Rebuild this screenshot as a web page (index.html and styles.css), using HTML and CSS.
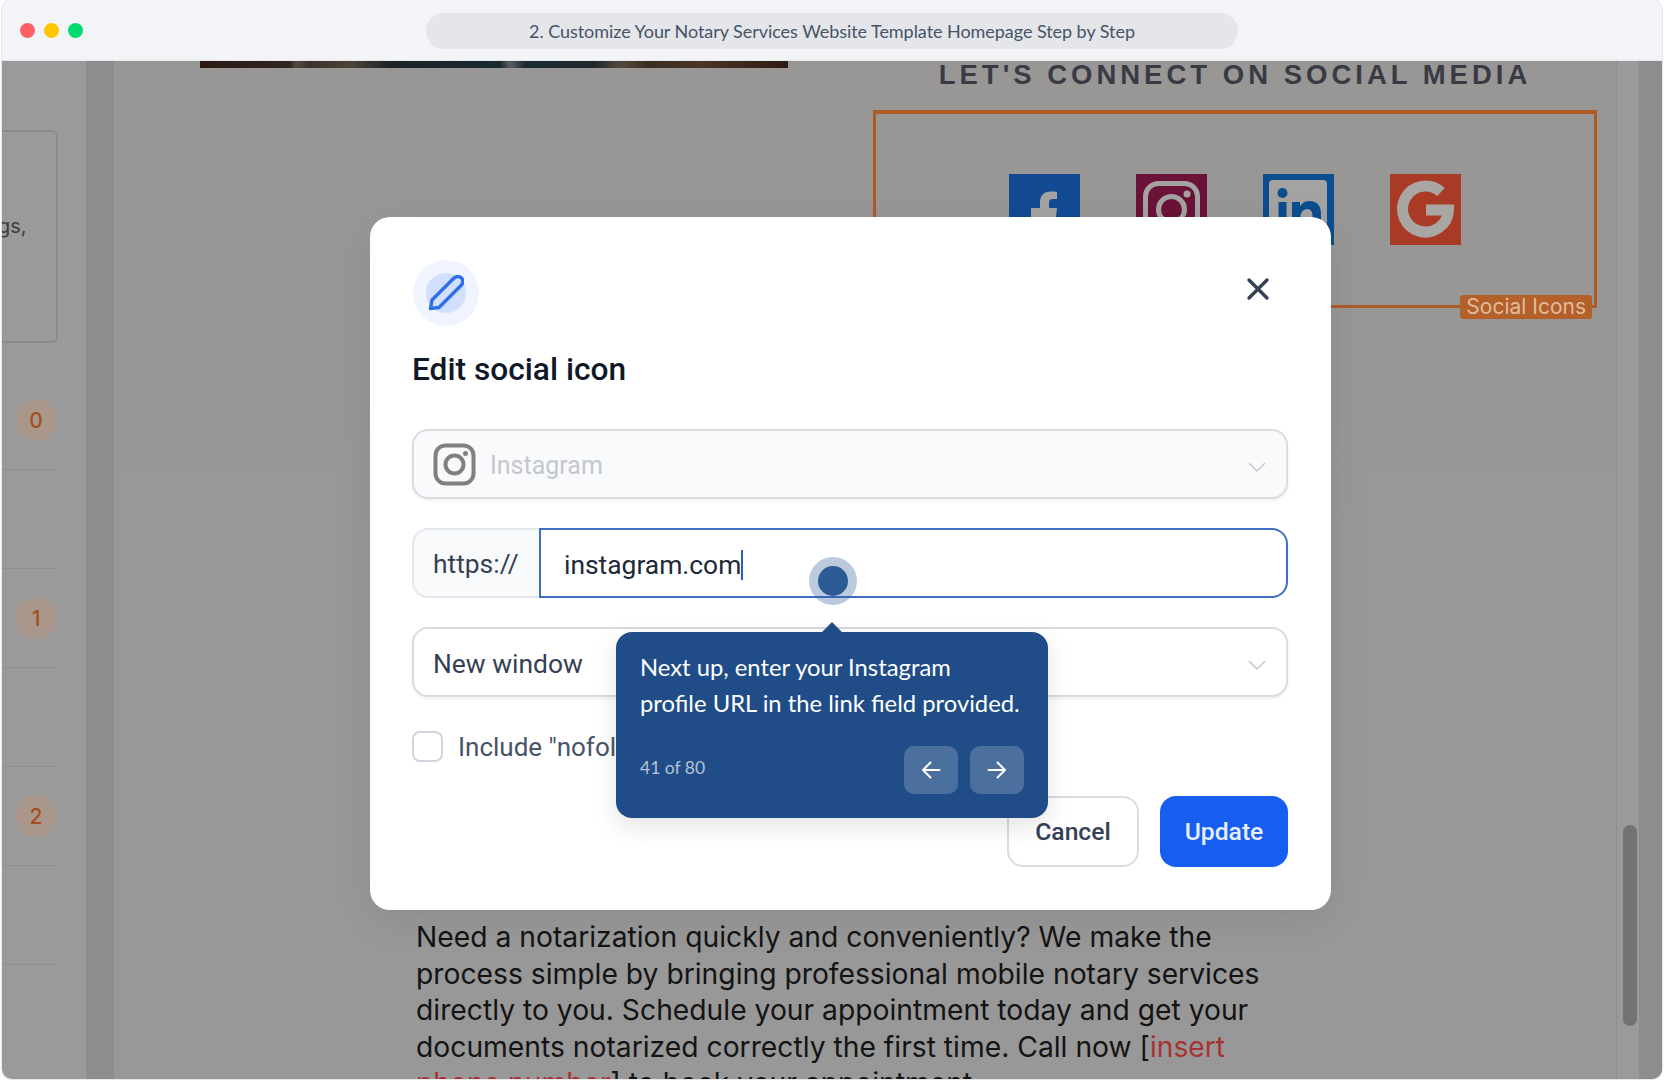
FILE: index.html
```html
<!DOCTYPE html>
<html>

<head>
    <meta content="text/html; charset=utf-8" http-equiv="Content-Type">
    <title>Edit social icon</title>
    <link rel="stylesheet" href="styles.css">
</head>

<body>
    <div class="appWindow">
        <div class="titleBar">
            <div class="trafficLights">
                <span class="light lightRed"></span>
                <span class="light lightYellow"></span>
                <span class="light lightGreen"></span>
            </div>
            <div class="addressPill">2. Customize Your Notary Services Website Template Homepage Step by Step</div>
        </div>

        <div class="stage">
            <div class="sideColumn">
                <div class="sideCard"><span class="sideCardText">gs,</span></div>
                <div class="sideRow firstRow"><span class="badge">0</span></div>
                <div class="sideRow"></div>
                <div class="sideRow"><span class="badge">1</span></div>
                <div class="sideRow"></div>
                <div class="sideRow"><span class="badge">2</span></div>
                <div class="sideRow"></div>
            </div>
            <div class="gutter"></div>

            <div class="canvas">
                <div class="topRow">
                    <div class="imageStrip"></div>
                    <div class="socialBlock">
                        <h2 class="socialHeading">LET'S CONNECT ON SOCIAL MEDIA</h2>
                        <div class="socialFrame">
                            <svg class="socialIcon" viewBox="0 0 71 71">
                                <rect width="71" height="71" fill="#124a94"></rect>
                                <path d="M31 71V43H22V34h9v-5c0-8 4-11.500 11-11.500 3 0 5 .2 6 .4V25h-4c-3 0-4 1.500-4 4v5h8l-1 9h-7v28z" fill="#a5a3a1"></path>
                            </svg>
                            <svg class="socialIcon" viewBox="0 0 71 71">
                                <rect width="71" height="71" fill="#6b1238"></rect>
                                <rect x="9.500" y="9.500" width="52" height="52" rx="13" fill="none" stroke="#a5a3a1" stroke-width="5"></rect>
                                <circle cx="35.500" cy="35.500" r="13" fill="none" stroke="#a5a3a1" stroke-width="5"></circle>
                                <circle cx="51" cy="20" r="3.500" fill="#a5a3a1"></circle>
                            </svg>
                            <svg class="socialIcon" viewBox="0 0 71 71">
                                <rect width="71" height="71" fill="#0b4d8f"></rect>
                                <rect x="6" y="6" width="58" height="59" rx="4" fill="#a5a3a1"></rect>
                                <circle cx="19.500" cy="19" r="5" fill="#0b4d8f"></circle>
                                <rect x="15.500" y="28" width="8" height="30" fill="#0b4d8f"></rect>
                                <path d="M29 58V28h8v4.500c2-3.500 5-5.500 9.500-5.500 8 0 11.500 5 11.500 13v18h-8.500V42c0-4-1.500-7-5-7s-7 3-7 7.500V58z" fill="#0b4d8f"></path>
                            </svg>
                            <svg class="socialIcon" viewBox="0 0 71 71">
                                <rect width="71" height="71" fill="#a83a26"></rect>
                                <path d="M51 18A23 23 0 1 0 58.500 36H36" fill="none" stroke="#a9a6a4" stroke-width="11"></path>
                            </svg>
                            <span class="frameLabel">Social Icons</span>
                        </div>
                    </div>
                </div>
                <p class="bodyCopy">Need a notarization quickly and conveniently? We make the process simple by bringing professional mobile notary services directly to you. Schedule your appointment today and get your documents notarized correctly the first time. Call now [<span class="placeholderText">insert phone number</span>] to book your appointment.</p>
            </div>

            <div class="scrollTrack"><span class="scrollThumb"></span></div>
            <div class="gutter gutterRight"></div>

            <div class="modal">
                <div class="modalHead">
                    <span class="iconHalo">
                        <span class="iconCore">
                            <svg class="pencilIcon" viewBox="0 0 36 36">
                                <path d="M2.500 33.500L4 25 25.500 3.500C28 1 31.500 1 33.500 3s1.500 5.500-.5 7.500L11 32.500z" fill="none" stroke="#2e6fe8" stroke-width="3.400" stroke-linejoin="round"></path>
                            </svg>
                        </span>
                    </span>
                    <svg class="closeIcon" viewBox="0 0 24 24">
                        <path d="M3 3l18 18M21 3L3 21" fill="none" stroke="#344054" stroke-width="3.400" stroke-linecap="round"></path>
                    </svg>
                </div>
                <h3 class="modalTitle">Edit social icon</h3>

                <div class="field fieldDisabled">
                    <svg class="instaGlyph" viewBox="0 0 43 43">
                        <rect x="2.500" y="2.500" width="38" height="38" rx="10" fill="none" stroke="#808080" stroke-width="4"></rect>
                        <circle cx="21.500" cy="21.500" r="9" fill="none" stroke="#808080" stroke-width="4"></circle>
                        <circle cx="32.500" cy="10.500" r="2.500" fill="#808080"></circle>
                    </svg>
                    <span class="fieldText mutedText">Instagram</span>
                    <svg class="chevron" viewBox="0 0 18 10">
                        <path d="M1 1l8 8 8-8" fill="none" stroke="#c4c7cd" stroke-width="1.500"></path>
                    </svg>
                </div>

                <div class="urlGroup">
                    <span class="urlPrefix">https://</span>
                    <div class="urlInput"><span class="urlValue">instagram.com</span><span class="caret"></span></div>
                </div>

                <div class="field">
                    <span class="fieldText">New window</span>
                    <svg class="chevron" viewBox="0 0 18 10">
                        <path d="M1 1l8 8 8-8" fill="none" stroke="#c4c7cd" stroke-width="1.500"></path>
                    </svg>
                </div>

                <div class="checkRow">
                    <span class="checkBox"></span>
                    <span class="checkLabel">Include "nofollow" tag</span>
                </div>

                <div class="modalActions">
                    <button class="btn btnCancel">Cancel</button>
                    <button class="btn btnUpdate">Update</button>
                </div>

                <span class="hotspot"><span class="hotspotDot"></span></span>

                <div class="tourTip">
                    <span class="tipArrow"></span>
                    <p class="tipText">Next up, enter your Instagram<br>profile URL in the link field provided.</p>
                    <div class="tipFoot">
                        <span class="tipCount">41 of 80</span>
                        <div class="tipNav">
                            <span class="tipBtn">
                                <svg class="tipArrowIcon" viewBox="0 0 20 18">
                                    <path d="M18.500 9H2M9.500 1.500L2 9l7.500 7.500" fill="none" stroke="#fff" stroke-width="2" stroke-linecap="round" stroke-linejoin="round"></path>
                                </svg>
                            </span>
                            <span class="tipBtn">
                                <svg class="tipArrowIcon" viewBox="0 0 20 18">
                                    <path d="M1.500 9H18M10.500 1.500L18 9l-7.500 7.500" fill="none" stroke="#fff" stroke-width="2" stroke-linecap="round" stroke-linejoin="round"></path>
                                </svg>
                            </span>
                        </div>
                    </div>
                </div>
            </div>
        </div>
    </div>
</body>

</html>
```

FILE: styles.css
```css
html, body {
    margin: 0;
    height: 100%;
    background: #fff;
}

.appWindow {
    display: flex;
    flex-direction: column;
    width: 1660px;
    height: 1079px;
    margin-left: 2px;
    border-radius: 10px;
    overflow: hidden;
    box-shadow: 0 0 0 1px #e5e7eb;
}

.titleBar {
    display: flex;
    align-items: center;
    flex: 0 0 61px;
    box-sizing: border-box;
    background: #f2f4f7;
    border-bottom: 1px solid #e4e7ec;
}

.trafficLights {
    display: flex;
    gap: 9px;
    margin-left: 18px;
}

.light {
    width: 15px;
    height: 15px;
    border-radius: 50%;
}

.lightRed { background: #ff6066; }
.lightYellow { background: #ffc600; }
.lightGreen { background: #00dd6e; }

.addressPill {
    width: 812px;
    height: 36px;
    margin-left: 343px;
    margin-top: 2px;
    border-radius: 18px;
    background: #e4e6ea;
    color: #475467;
    font-family: Lato, sans-serif;
    font-size: 18px;
    letter-spacing: -.05px;
    line-height: 36px;
    text-align: center;
}

.stage {
    position: relative;
    display: flex;
    flex: 1;
    min-height: 0;
    background: #9a9a9a;
    overflow: hidden;
}

.sideColumn {
    flex: 0 0 84px;
    padding-top: 69px;
    box-sizing: border-box;
}

.sideCard {
    position: relative;
    width: 56px;
    height: 213px;
    box-sizing: border-box;
    border: 2px solid #8b8b8b;
    border-left: 0;
    border-radius: 0 6px 6px 0;
    overflow: hidden;
}

.sideCardText {
    position: absolute;
    left: -4px;
    top: 82px;
    color: #3d3d3d;
    font-family: Inter, sans-serif;
    font-size: 20px;
}

.sideRow {
    display: flex;
    align-items: center;
    height: 99px;
    width: 55px;
    box-sizing: border-box;
    border-bottom: 1px solid #8f8f8f;
}

.firstRow {
    height: 127px;
    align-items: flex-end;
    padding-bottom: 28px;
}

.badge {
    display: flex;
    align-items: center;
    justify-content: center;
    width: 43px;
    height: 42px;
    margin-left: 13px;
    border-radius: 50%;
    background: #a8978a;
    color: #a64e22;
    font-family: Inter, sans-serif;
    font-size: 21px;
    font-weight: 500;
}

.gutter {
    flex: 0 0 28px;
    background: #8c8d8f;
}

.gutterRight {
    flex: 0 0 23px;
}

.canvas {
    flex: 1;
    min-width: 0;
    background: linear-gradient(#989795 340px, #989898 460px);
    overflow: hidden;
}

.topRow {
    display: flex;
    align-items: flex-start;
    height: 858px;
}

.imageStrip {
    flex: 0 0 588px;
    height: 7px;
    margin-left: 86px;
    background: linear-gradient(90deg, #2a1a12, #30261e 90px, #554a3f 96px, #3a3129 110px, #4d4338 150px, #1c2226 190px, #1a2a33 300px, #5c5e60 310px, #1a2a33 325px, #1f2a2e 395px, #55483b 420px, #3a2c22 450px, #4a3527 500px, #2e1a14);
}

.socialBlock {
    width: 724px;
    margin-left: 85px;
}

.socialHeading {
    margin: 0;
    color: #3a3a45;
    font-family: "Liberation Sans", sans-serif;
    font-size: 27.5px;
    font-weight: 700;
    letter-spacing: 4px;
    line-height: 27px;
    text-align: center;
    white-space: nowrap;
}

.socialFrame {
    position: relative;
    display: flex;
    gap: 56px;
    height: 198px;
    margin-top: 22px;
    padding: 60px 0 0 133px;
    box-sizing: border-box;
    border: 3px solid #ad5c28;
    border-top-width: 4px;
}

.socialIcon {
    width: 71px;
    height: 71px;
    flex: none;
}

.frameLabel {
    position: absolute;
    right: 2px;
    bottom: -14px;
    padding: 0 6px;
    height: 24px;
    border-radius: 3px;
    background: #b4602a;
    color: #e0bb9d;
    font-family: Inter, sans-serif;
    font-size: 21px;
    line-height: 24px;
}

.bodyCopy {
    width: 860px;
    margin: 0 0 0 302px;
    color: #141414;
    font-family: Inter, sans-serif;
    font-size: 28.25px;
    line-height: 36.5px;
}

.placeholderText {
    color: #a83232;
}

.scrollTrack {
    flex: 0 0 23px;
    position: relative;
    border-left: 1px solid #8e8e8e;
    background: #9a9a9a;
    box-sizing: border-box;
}

.scrollThumb {
    position: absolute;
    left: 6px;
    top: 764px;
    width: 14px;
    height: 201px;
    border-radius: 7px;
    background: #737373;
}

.modal {
    position: absolute;
    left: 368px;
    top: 156px;
    width: 961px;
    height: 693px;
    padding: 43px 43px 0 42px;
    box-sizing: border-box;
    border-radius: 20px;
    background: #fff;
    box-shadow: 0 10px 40px rgba(0, 0, 0, .08);
    font-family: Roboto, sans-serif;
}

.modalHead {
    display: flex;
    justify-content: space-between;
    align-items: flex-start;
}

.iconHalo {
    display: flex;
    align-items: center;
    justify-content: center;
    width: 66px;
    height: 66px;
    margin-left: 1px;
    border-radius: 50%;
    background: #eff4ff;
}

.iconCore {
    display: flex;
    align-items: center;
    justify-content: center;
    width: 40px;
    height: 40px;
    border-radius: 50%;
    background: #d1e0ff;
}

.pencilIcon {
    width: 36px;
    height: 36px;
    flex: none;
}

.closeIcon {
    width: 24px;
    height: 24px;
    margin: 17px 18px 0 0;
}

.modalTitle {
    margin: 22px 0 37px;
    color: #101828;
    font-size: 31.7px;
    font-weight: 500;
    line-height: 44px;
}

.field {
    display: flex;
    align-items: center;
    height: 70px;
    margin-bottom: 29px;
    padding: 0 19px;
    box-sizing: border-box;
    border: 2px solid #d9dce2;
    border-radius: 16px;
    background: #fff;
    box-shadow: 0 2px 3px rgba(16, 24, 40, .06);
}

.fieldDisabled {
    background: #f9fafb;
}

.fieldText {
    margin-top: 3px;
    color: #344054;
    font-size: 26.4px;
}

.mutedText {
    margin-top: 2px;
    margin-left: 14px;
    color: #c4c7cf;
    font-size: 25px;
}

.instaGlyph {
    width: 43px;
    height: 43px;
    flex: none;
}

.chevron {
    width: 18px;
    height: 10px;
    margin-left: auto;
    margin-top: 5px;
    margin-right: 1px;
    flex: none;
}

.urlGroup {
    display: flex;
    height: 70px;
    margin-bottom: 29px;
}

.urlPrefix {
    flex: 0 0 127px;
    padding-left: 19px;
    box-sizing: border-box;
    border: 2px solid #e4e7ec;
    border-right: 0;
    border-radius: 16px 0 0 16px;
    background: #f9fafb;
    color: #344054;
    font-size: 26.4px;
    line-height: 69px;
}

.urlInput {
    display: flex;
    align-items: center;
    flex: 1;
    padding: 3px 0 0 23px;
    box-sizing: border-box;
    border: 2px solid #3f6fc4;
    border-radius: 0 16px 16px 0;
    color: #1d2939;
    font-size: 26.4px;
}

.caret {
    width: 2px;
    height: 30px;
    background: #2d5fb0;
}

.checkRow {
    display: flex;
    align-items: center;
    gap: 15px;
    margin-top: 34px;
}

.checkBox {
    width: 31px;
    height: 31px;
    box-sizing: border-box;
    border: 2px solid #d0d5dd;
    border-radius: 8px;
}

.checkLabel {
    color: #475467;
    font-size: 26px;
}

.modalActions {
    display: flex;
    justify-content: flex-end;
    gap: 21px;
    margin-top: 34px;
}

.btn {
    height: 71px;
    border-radius: 16px;
    font-family: Roboto, sans-serif;
    font-size: 24.7px;
    font-weight: 500;
}

.btnCancel {
    width: 132px;
    border: 2px solid #d9dce2;
    background: #fff;
    color: #344054;
}

.btnUpdate {
    width: 128px;
    border: 0;
    background: #155eef;
    color: #e6eeff;
}

.hotspot {
    position: absolute;
    left: 439px;
    top: 340px;
    display: flex;
    align-items: center;
    justify-content: center;
    width: 48px;
    height: 48px;
    border-radius: 50%;
    background: rgba(43, 90, 148, .32);
}

.hotspotDot {
    width: 30px;
    height: 30px;
    border-radius: 50%;
    background: #2b5a94;
}

.tourTip {
    position: absolute;
    left: 246px;
    top: 415px;
    width: 432px;
    height: 186px;
    padding: 17px 24px 0;
    box-sizing: border-box;
    border-radius: 16px;
    background: #204d87;
    box-shadow: 0 8px 24px rgba(16, 24, 40, .12);
    font-family: Lato, sans-serif;
}

.tipArrow {
    position: absolute;
    left: 209px;
    top: -7px;
    width: 14px;
    height: 14px;
    background: #204d87;
    transform: rotate(45deg);
}

.tipText {
    margin: 0;
    color: #fff;
    font-size: 23.8px;
    line-height: 36px;
}

.tipFoot {
    display: flex;
    align-items: center;
    justify-content: space-between;
    margin-top: 25px;
}

.tipCount {
    margin-bottom: 6px;
    color: #b4c3d8;
    font-size: 17.5px;
}

.tipNav {
    display: flex;
    gap: 12px;
}

.tipBtn {
    display: flex;
    align-items: center;
    justify-content: center;
    width: 54px;
    height: 48px;
    border-radius: 10px;
    background: #4c709e;
}

.tipArrowIcon {
    width: 20px;
    height: 18px;
}
```
